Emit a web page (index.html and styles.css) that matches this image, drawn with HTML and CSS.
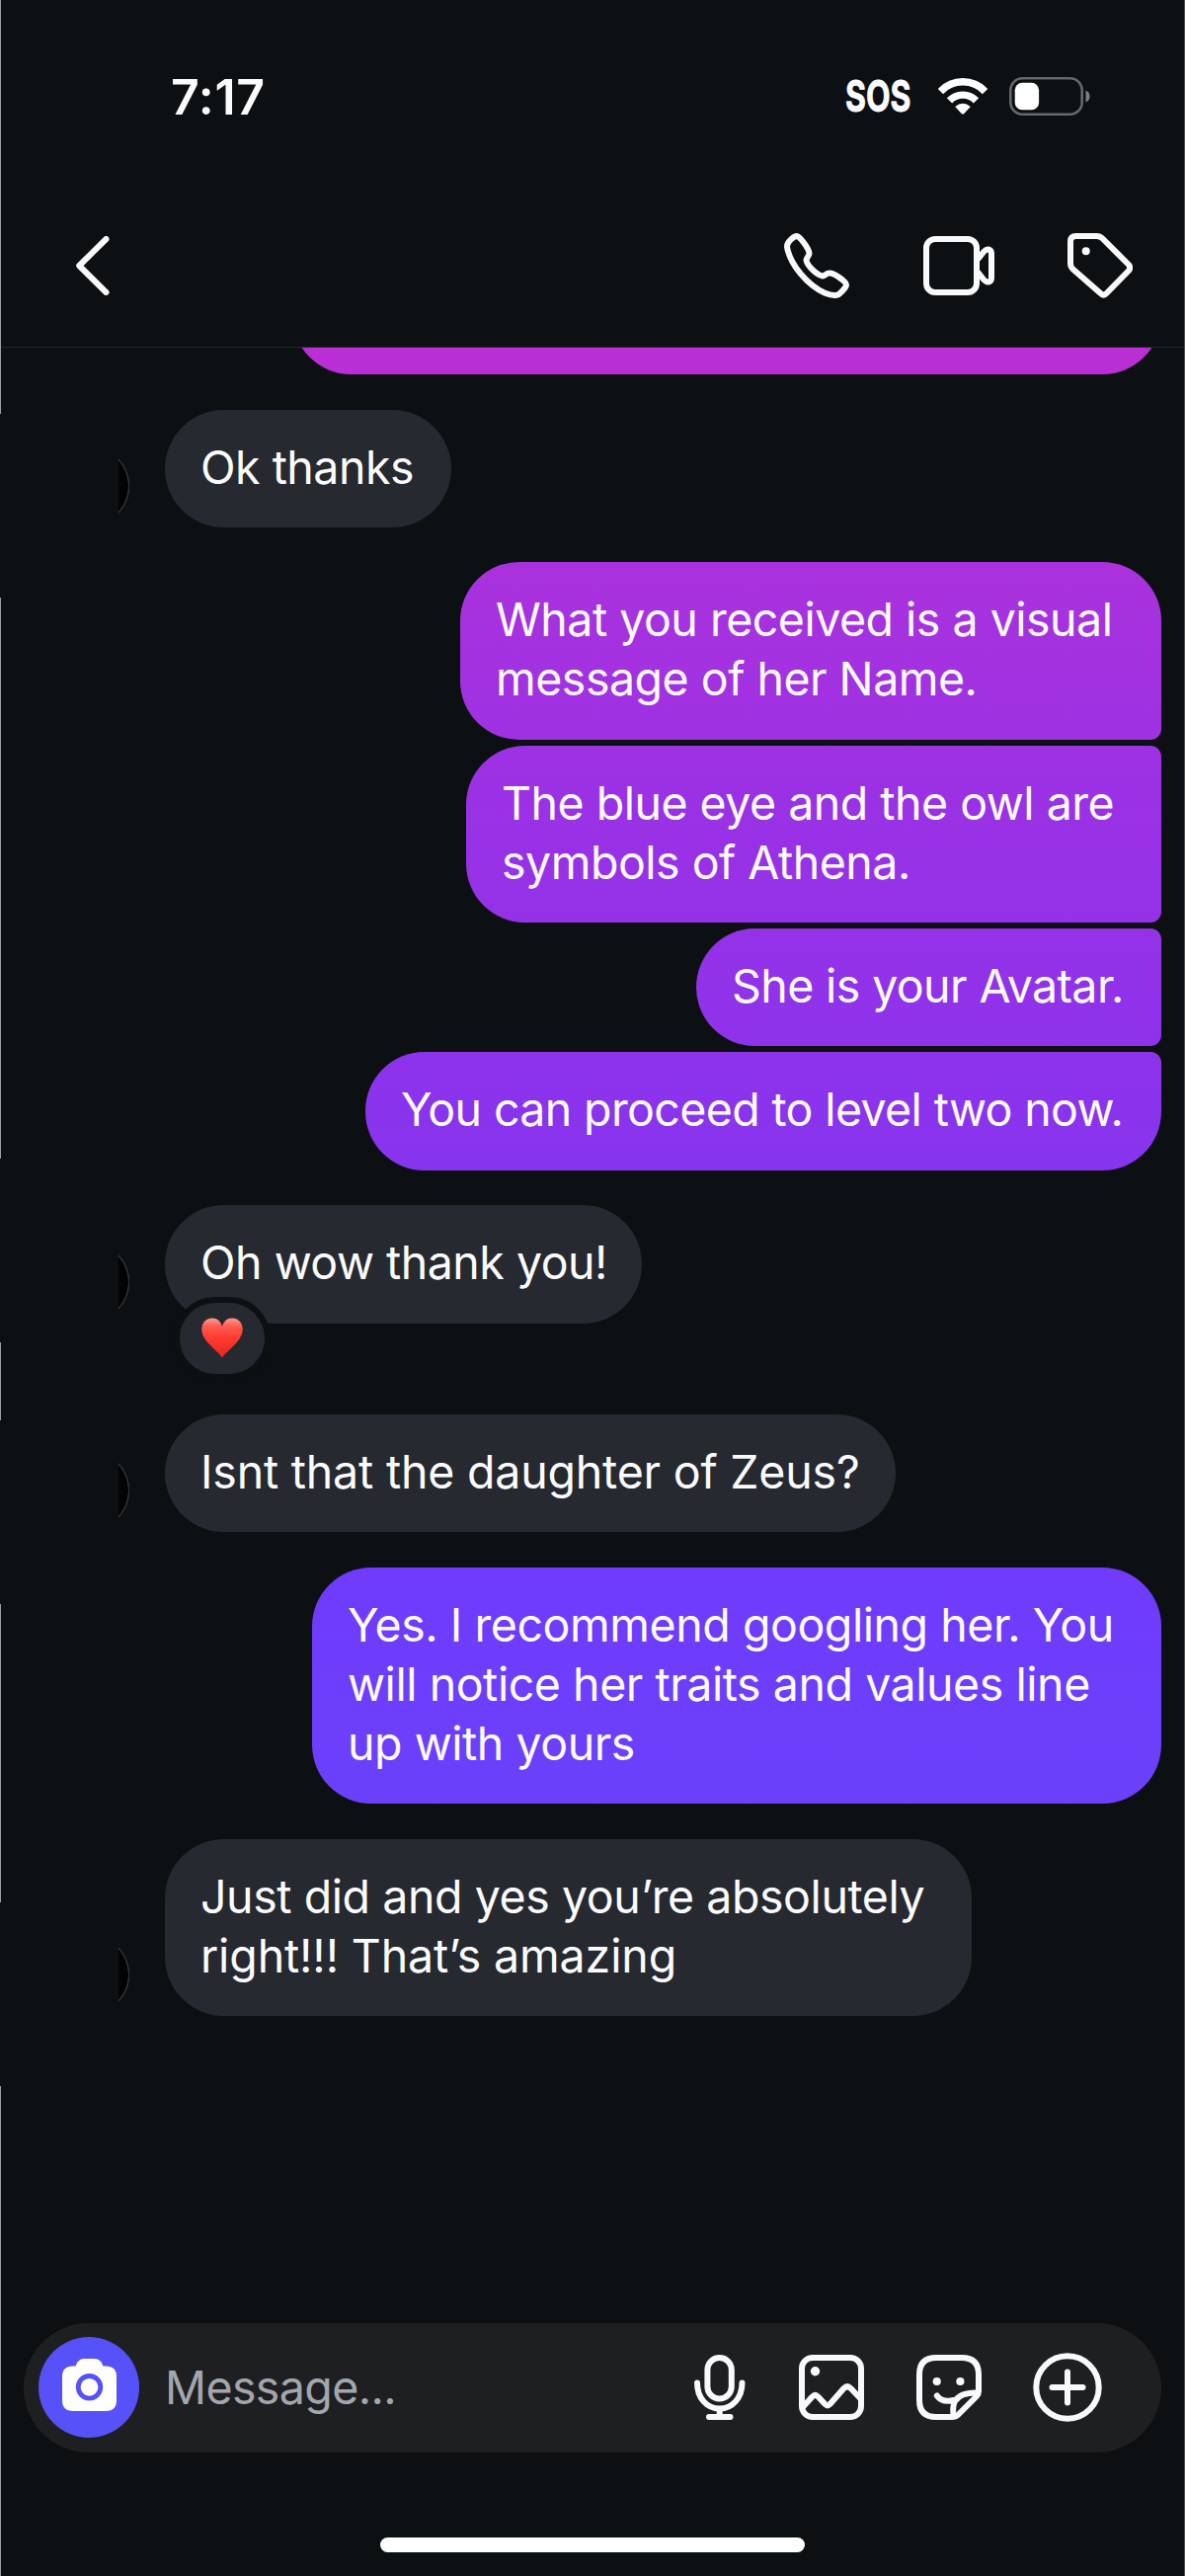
FILE: index.html
```html
<!DOCTYPE html>
<html lang="en">
<head>
<meta charset="utf-8">
<title>Messages</title>
<link rel="stylesheet" href="styles.css">
</head>
<body>
<div class="phone">
  <div class="status">
    <span class="time">7:17</span>
    <div class="indicators">
      <span class="sos">SOS</span>
      <svg class="wifi" width="50" height="37" viewBox="0 0 50 37" fill="none" stroke="#fff" stroke-width="7.4"><path d="M2.4 13.6A31 31 0 0 1 47.6 13.6"/><path d="M11.5 22.9A18.6 18.6 0 0 1 38.5 22.9"/><path d="M17.2 29Q25 22.6 32.8 29L26.3 36Q25 37.2 23.7 36Z" fill="#fff" stroke="none"/></svg>
      <svg width="82" height="39" viewBox="0 0 82 39"><rect x="1.3" y="1.3" width="72.4" height="36.4" rx="12" fill="none" stroke="#66696b" stroke-width="2.6"/><rect x="5.7" y="5.8" width="24.4" height="27.4" rx="7.5" fill="#fff"/><path d="M77.5 13.5Q81.5 15 81.5 19.500T77.5 25.500Z" fill="#7c7f80"/></svg>
    </div>
  </div>
  <header class="topbar">
    <svg width="34" height="60" viewBox="0 0 34 60" class="icon"><path d="M30.500 3L3.200 30L30.500 57"/></svg>
    <div class="actions">
      <svg width="66" height="66" viewBox="0 0 66 66" class="icon"><path d="M13 3C15.500 3 25 15 25.500 20.500C25.500 23.500 22.500 24.500 22.500 27.500C23.500 33 33 42.500 39 43.500C41.500 43.500 42.500 40.500 46 40.500C51 40.500 63 49 63 52.500C63 55 57 61 55 62.300C52 63.500 47 63 41 60.500C24 53 6 32 3 14C2.600 9 10 3 13 3Z"/></svg>
      <svg width="72" height="60" viewBox="0 0 72 60" class="icon"><rect x="3" y="3" width="51" height="54" rx="9"/><path d="M56 22.500L61.500 15.500Q64 13 66.500 13.700Q69 14.500 69 18V42Q69 45.500 66.500 46.300Q64 47 61.500 44.500L56 37.500"/></svg>
      <svg width="66" height="66" viewBox="0 0 66 66" class="icon"><path d="M8.500 3H29.500Q33 3 35.500 5.500L62 32Q64.500 35 62 38L39.500 61Q36.500 64 33.500 61L5.500 36.500Q3 34 3 30.500V8.500Q3 3 8.500 3Z"/><circle cx="18.700" cy="18.300" r="4" class="dot"/></svg>
    </div>
  </header>

  <main class="chat">
    <div class="row out cut"><div class="bubble b0"></div></div>
    <div class="row in"><i class="avatar"></i><div class="bubble b1">Ok thanks</div></div>
    <div class="group">
      <div class="row out"><div class="bubble b2 first">What you received is a visual<br>message of her Name.</div></div>
      <div class="row out"><div class="bubble b3 mid">The blue eye and the owl are<br>symbols of Athena.</div></div>
      <div class="row out"><div class="bubble b4 mid">She is your Avatar.</div></div>
      <div class="row out"><div class="bubble b5 last">You can proceed to level two now.</div></div>
    </div>
    <div class="row in reacted"><i class="avatar"></i><div class="bubble b6">Oh wow thank you!
      <span class="reaction"><svg width="42" height="41" viewBox="0 0 42 41"><defs><linearGradient id="h" x1="0" y1="0" x2="0" y2="1"><stop offset="0" stop-color="#ff9a92"/><stop offset=".22" stop-color="#ff5a4e"/><stop offset=".5" stop-color="#ff3b30"/><stop offset="1" stop-color="#e8261c"/></linearGradient></defs><path d="M21 40.500C19 37 13 32.500 7 26C2 20.500 .3 16 .3 11.500C.3 5 5 .4 11 .4C16 .4 19.500 3.500 21 9C22.500 3.500 26 .4 31 .4C37 .4 41.700 5 41.700 11.500C41.700 16 40 20.500 35 26C29 32.500 23 37 21 40.500Z" fill="url(#h)"/></svg></span></div></div>
    <div class="row in"><i class="avatar"></i><div class="bubble b7">Isnt that the daughter of Zeus?</div></div>
    <div class="row out"><div class="bubble b8">Yes. I recommend googling her. You<br>will notice her traits and values line<br>up with yours</div></div>
    <div class="row in"><i class="avatar"></i><div class="bubble b9">Just did and yes you’re absolutely<br><span class="loose">right!!! That’s amazing</span></div></div>
  </main>

  <footer class="composer">
    <div class="camera"><svg width="55" height="53" viewBox="0 0 55 53"><path d="M13.500 7.500Q16 0 22 0H33Q39 0 41.500 7.500H44Q55 7.500 55 18V42Q55 53 44 53H11Q0 53 0 42V18Q0 7.500 11 7.500Z" fill="#fff"/><circle cx="27.500" cy="28.800" r="11.300" fill="none" stroke="#5651f8" stroke-width="4.800"/></svg></div>
    <span class="placeholder">Message...</span>
    <svg width="52" height="66" viewBox="0 0 52 66" class="icon mic"><rect x="13.400" y="3" width="24.400" height="41.500" rx="12.200"/><path d="M3 28.500C3 43.500 12.500 54.500 25.700 54.500S48.500 43.500 48.500 28.500M25.700 54.500V63M15 63H36.500"/></svg>
    <svg width="66" height="66" viewBox="0 0 66 66" class="icon pic"><rect x="3" y="3" width="60" height="60" rx="11"/><path d="M4 53L13.500 42.500Q16.500 39.500 19.500 42.500L26.500 50Q29 52.500 31.500 50L45.500 34Q49 30.500 52.500 34L62.500 44.500"/><circle cx="16.500" cy="16.700" r="4.700" class="dot"/></svg>
    <svg width="66" height="66" viewBox="0 0 66 66" class="icon sticker"><path d="M36 63H20Q3 63 3 46V20Q3 3 20 3H46Q63 3 63 20V37Q63 40 61 42L42 61Q40 63 36 63Z"/><path d="M62 38.500C49 38 42 42 39 47Q36.500 52 37.500 61.500"/><path d="M20.800 41.500C24 46 30 48 38 46"/><circle cx="20.700" cy="27" r="4.100" class="dot"/><circle cx="44.400" cy="27" r="4.100" class="dot"/></svg>
    <svg width="70" height="70" viewBox="0 0 70 70" class="icon plus"><circle cx="35" cy="35" r="31.700"/><path d="M35 19.500V50.500M19.500 35H50.500"/></svg>
  </footer>
  <div class="home"></div>
  <div class="edge"></div>
</div>
</body>
</html>
```
FILE: styles.css
```css
* { box-sizing: border-box; }
body { margin: 0; background: #0c1012; }

.phone {
  position: relative;
  display: flex;
  flex-direction: column;
  width: 1200px;
  height: 2608px;
  overflow: hidden;
  background: #0c1012;
  border-right: 1px solid #4d5052;
  color: #fafbfc;
  font: 400 46.5px/60px Inter, "Liberation Sans", sans-serif;
}

.icon {
  flex: none;
  fill: none;
  stroke: #f8f9fa;
  stroke-width: 6;
  stroke-linecap: round;
  stroke-linejoin: round;
}
.icon .dot { fill: #f8f9fa; stroke: none; }

.status {
  display: flex;
  align-items: center;
  justify-content: space-between;
  height: 194px;
  padding: 0 95px 0 173px;
}
.time { font-size: 50px; font-weight: 600; letter-spacing: .7px; padding-top: 1px; }
.indicators { display: flex; align-items: center; }
.sos {
  width: 66px;
  margin-right: 28px;
  font: 700 43.500px/60px Inter, sans-serif;
  -webkit-text-stroke: .8px #fff;
  transform: scaleX(.735);
  transform-origin: left;
}
.wifi { margin-right: 22px; }

.topbar {
  display: flex;
  align-items: center;
  justify-content: space-between;
  flex: none;
  height: 158px;
  padding: 0 52px 8px 77px;
  border-bottom: 1px solid #25282b;
}
.actions { display: flex; align-items: center; gap: 74.500px; }

.chat {
  display: flex;
  flex-direction: column;
  gap: 35.600px;
  height: 2000px;
  overflow: hidden;
}
.group { display: flex; flex-direction: column; gap: 6px; }
.row { display: flex; align-items: flex-end; }
.out { justify-content: flex-end; padding-right: 23px; }
.in { gap: 36px; padding-left: 120px; }

.bubble {
  position: relative;
  flex: none;
  padding: 28px 0 31.300px 36px;
  border-radius: 59.700px;
  letter-spacing: -.5px;
  white-space: nowrap;
}
.in .bubble { background: #26292f; }
.out .bubble {
  background: linear-gradient(#c42dce 180px, #b92fd5 360px, #a932dd 580px, #9b31e4 800px, #8c33ec 1100px, #703bfb 1600px, #6a41fb 1830px) fixed;
}
.first { border-bottom-right-radius: 11px; }
.mid { border-top-right-radius: 11px; border-bottom-right-radius: 11px; }
.last { border-top-right-radius: 11px; }

.cut { height: 27px; }
.b0 { width: 880px; height: 119px; }
.b1 { width: 290px; }
.b2 { width: 710px; }
.b3 { width: 704px; }
.b4 { width: 471px; letter-spacing: -.6px; }
.b5 { width: 806px; letter-spacing: -.63px; }
.b6 { width: 483px; }
.b7 { width: 740px; letter-spacing: -.2px; }
.b8 { width: 860px; letter-spacing: -.45px; }
.b9 { width: 817px; letter-spacing: -.43px; }
.loose { letter-spacing: -.12px; }
.reacted { margin-bottom: 57px; }

/* Only the right-hand sliver of each avatar is visible */
.avatar {
  width: 11px;
  height: 80px;
  margin-bottom: 2px;
  background: radial-gradient(circle at -29px 40px, #020304 38.500px, #303437 39px, #303437 39.800px, transparent 40.500px);
}

.reaction {
  position: absolute;
  left: 9px;
  top: 92.500px;
  display: flex;
  align-items: center;
  justify-content: center;
  width: 98px;
  height: 84px;
  border: 6px solid #0c1012;
  border-radius: 42px;
  background: #26292f;
}

.composer {
  display: flex;
  align-items: center;
  flex: none;
  width: 1152px;
  height: 131px;
  margin-left: 24px;
  padding: 0 0 1px 15px;
  border-radius: 65.500px;
  background: #1e1f20;
}
.camera {
  display: flex;
  align-items: center;
  justify-content: center;
  width: 102px;
  height: 102px;
  padding-bottom: 6px;
  border-radius: 50%;
  background: #5651f8;
}
.placeholder {
  width: 535px;
  margin-left: 26px;
  margin-right: 1px;
  padding-bottom: 1px;
  color: #a3a6ad;
  letter-spacing: -.6px;
}
.pic { margin-left: 54px; }
.sticker { margin-left: 53px; }
.plus { margin-left: 52px; }

.home {
  width: 430px;
  height: 15px;
  margin: 86px 0 0 385px;
  border-radius: 8px;
  background: #fff;
}

.edge {
  position: absolute;
  left: 0;
  top: 0;
  width: 1px;
  height: 100%;
  background: linear-gradient(#9da1a3 419px, transparent 419px 605px, #9da1a3 605px 1173px, transparent 1173px 1359px, #9da1a3 1359px 1438px, transparent 1438px 1624px, #9da1a3 1624px 1926px, transparent 1926px 2112px, #9da1a3 2112px);
}
```
